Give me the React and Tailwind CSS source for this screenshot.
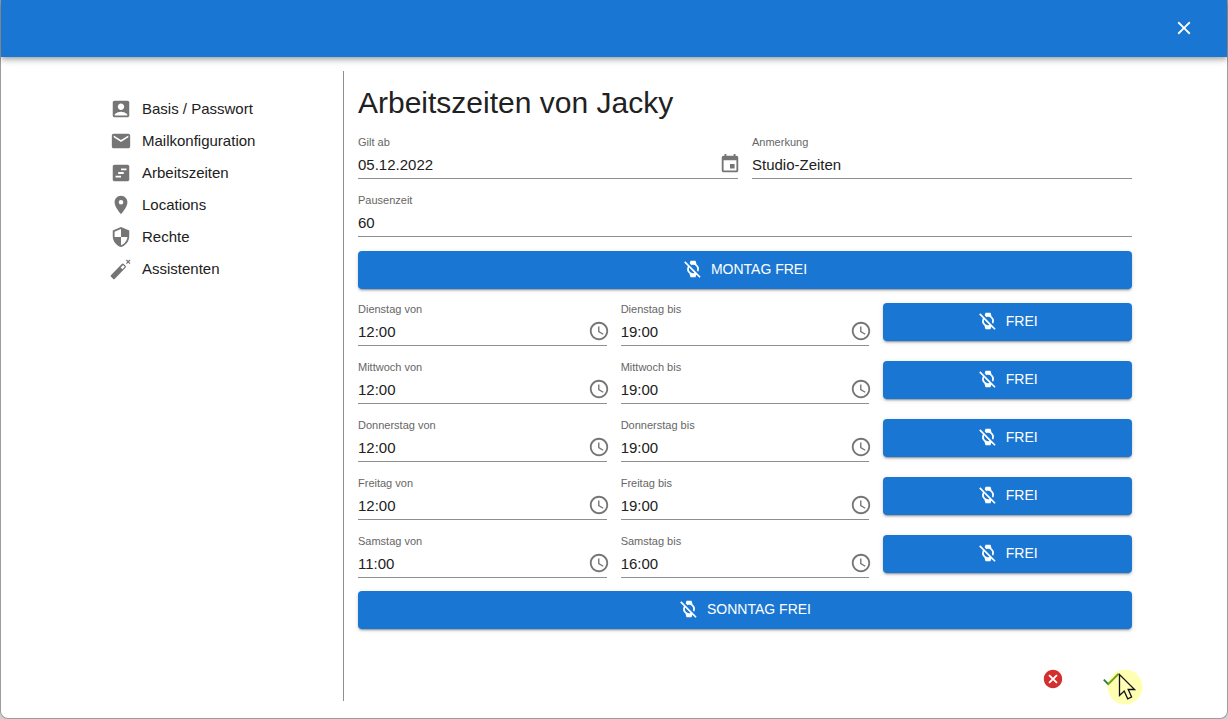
import React, { useId } from "react";
import {
  MdAccessTime,
  MdAccountBox,
  MdCancel,
  MdCheck,
  MdClose,
  MdEvent,
  MdLocationOn,
  MdMail,
  MdSecurity,
  MdViewTimeline,
  MdWatchOff,
} from "react-icons/md";

function WandIcon({ className }) {
  return (
    <svg viewBox="0 0 22 22" className={className} fill="currentColor" aria-hidden="true">
      <path
        fillRule="evenodd"
        d="M.9 17.2 11.8 6.1a1.5 1.5 0 0 1 2.1 0l1.6 1.6a1.5 1.5 0 0 1 0 2.1L4.6 20.9a1 1 0 0 1-1.4 0L.9 18.6a1 1 0 0 1 0-1.4ZM10.6 9.4l1.8 1.9 2-2.1a.7.7 0 0 0 0-1l-.8-.8a.7.7 0 0 0-1 0Z"
      />
      <path d="m16.4 2 3.6 3.6m0-3.6-3.6 3.6" stroke="currentColor" strokeWidth="1.2" />
    </svg>
  );
}

const NAV = [
  ["Basis / Passwort", MdAccountBox],
  ["Mailkonfiguration", MdMail],
  ["Arbeitszeiten", MdViewTimeline],
  ["Locations", MdLocationOn],
  ["Rechte", MdSecurity],
  ["Assistenten", WandIcon],
];

const DAYS = [
  ["Dienstag", "12:00", "19:00"],
  ["Mittwoch", "12:00", "19:00"],
  ["Donnerstag", "12:00", "19:00"],
  ["Freitag", "12:00", "19:00"],
  ["Samstag", "11:00", "16:00"],
];

function Field({ label, value, icon: Icon, action }) {
  const id = useId();
  return (
    <div className="min-w-0 border-b border-[#8f8f8f]">
      <label htmlFor={id} className="block text-[11px] leading-[13px] text-[#666]">
        {label}
      </label>
      <div className="flex h-[29px] items-center">
        <input
          id={id}
          type="text"
          defaultValue={value}
          className="w-full min-w-0 flex-1 bg-transparent pt-[3px] text-[15px] text-[#212121] outline-none"
        />
        {Icon && (
          <button type="button" aria-label={action} className="-mr-[3px] shrink-0 text-[#757575]">
            <Icon className="size-[22px]" />
          </button>
        )}
      </div>
    </div>
  );
}

function FreeButton({ children }) {
  return (
    <button
      type="button"
      className="flex h-[38px] w-full items-center justify-center gap-2 rounded bg-[#1976d2] pb-[2px] text-sm text-white shadow-[0_3px_1px_-2px_rgba(0,0,0,0.2),0_2px_2px_0_rgba(0,0,0,0.14),0_1px_5px_0_rgba(0,0,0,0.12)]"
    >
      <MdWatchOff className="size-5" />
      {children}
    </button>
  );
}

export default function App() {
  return (
    <div className="min-h-screen bg-[#d0d0d0] font-['Liberation_Sans',Arial,sans-serif] text-[#212121]">
      <div className="flex min-h-screen flex-col rounded-b-lg border-x border-b border-[#9c9c9c] bg-white">
        <header className="flex h-[57px] shrink-0 items-center justify-end bg-[#1976d2] px-8 pb-[2px] shadow-[0_2px_4px_-1px_rgba(0,0,0,0.2),0_4px_5px_0_rgba(0,0,0,0.14),0_1px_10px_0_rgba(0,0,0,0.12)]">
          <button type="button" aria-label="Schließen" className="text-white">
            <MdClose className="size-[22px]" />
          </button>
        </header>

        <div className="flex flex-1 px-[95px] pt-[14px] pb-[17px]">
          <nav className="w-[248px] shrink-0 border-r border-[#8f8f8f] pt-[27px] pl-[14px]">
            <ul className="flex flex-col gap-[10px]">
              {NAV.map(([label, Icon]) => (
                <li key={label}>
                  <a href="#" className="flex items-center gap-[10px] text-[15px] leading-[22px]">
                    <Icon className="size-[22px] text-[#757575]" />
                    {label}
                  </a>
                </li>
              ))}
            </ul>
          </nav>

          <main className="flex min-w-0 flex-1 flex-col pt-[14px] pl-[14px]">
            <h1 className="text-[30px] leading-9">Arbeitszeiten von Jacky</h1>

            <div className="mt-[15px] grid grid-cols-2 gap-x-[14px] gap-y-[15px]">
              <Field label="Gilt ab" value="05.12.2022" icon={MdEvent} action="Datum wählen" />
              <Field label="Anmerkung" value="Studio-Zeiten" />
              <div className="col-span-2">
                <Field label="Pausenzeit" value="60" />
              </div>
            </div>

            <div className="mt-[14px]">
              <FreeButton>MONTAG FREI</FreeButton>
            </div>

            <div className="mt-[14px] flex flex-col gap-[15px]">
              {DAYS.map(([day, from, to]) => (
                <div key={day} className="grid h-[43px] grid-cols-3 gap-x-[14px]">
                  <Field label={`${day} von`} value={from} icon={MdAccessTime} action="Uhrzeit wählen" />
                  <Field label={`${day} bis`} value={to} icon={MdAccessTime} action="Uhrzeit wählen" />
                  <FreeButton>FREI</FreeButton>
                </div>
              ))}
            </div>

            <div className="mt-[13px]">
              <FreeButton>SONNTAG FREI</FreeButton>
            </div>

            <div className="mt-auto flex justify-end gap-9 pr-[10px] pb-[11px]">
              <button type="button" aria-label="Abbrechen" className="text-[#d32f2f]">
                <MdCancel className="size-[22px]" />
              </button>
              <button type="button" aria-label="Speichern" className="relative text-[#2e7d32]">
                <MdCheck className="size-[22px]" />
                <svg
                  viewBox="0 0 36 36"
                  className="pointer-events-none absolute top-[1px] left-[7px] size-9 max-w-none"
                  aria-hidden="true"
                >
                  <circle cx="18" cy="18" r="17.5" fill="#ffff00" fillOpacity="0.3" />
                  <path
                    d="M12.5 5.5v21l4.7-4.5 3.5 7.8 3.9-1.8-3.4-7.5h6.4Z"
                    fill="#ffffb8"
                    stroke="#111"
                    strokeWidth="1.3"
                  />
                </svg>
              </button>
            </div>
          </main>
        </div>
      </div>
    </div>
  );
}
